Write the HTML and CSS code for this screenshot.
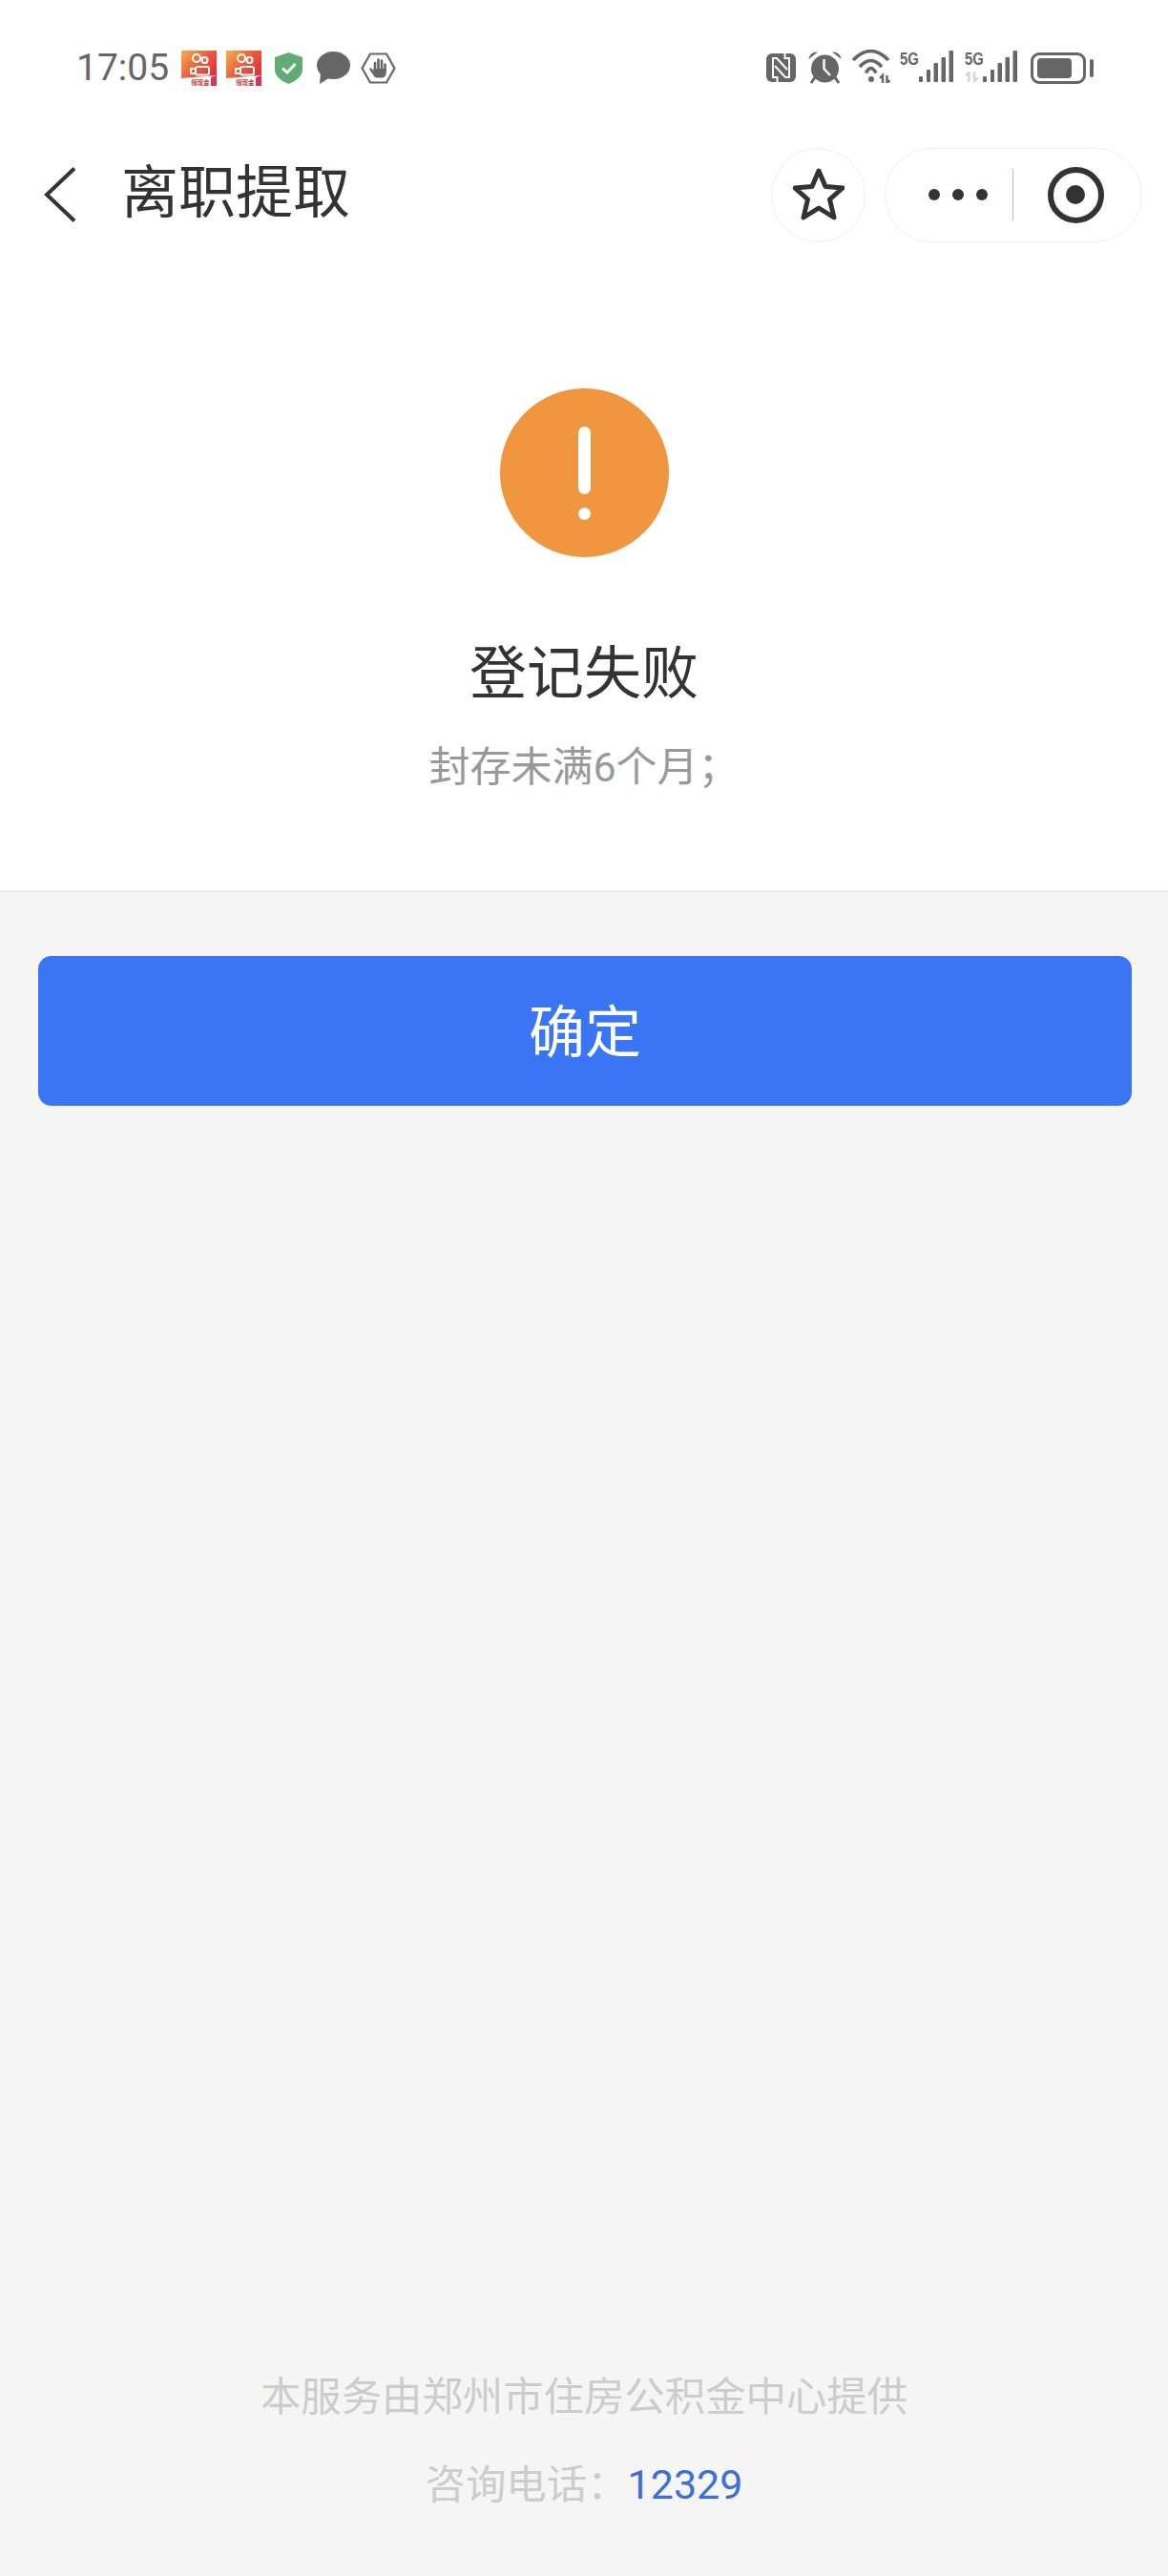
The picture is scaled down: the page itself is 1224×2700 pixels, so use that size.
FILE: index.html
```html
<!DOCTYPE html>
<html lang="zh-CN">
  <head>
    <meta charset="UTF-8" />
    <meta name="viewport" content="width=device-width, initial-scale=1.0" />
    <title>离职提取</title>
    <link rel="stylesheet" href="styles.css">
  </head>

  <body>
    <svg class="defs" width="0" height="0">
      <defs>
        <linearGradient id="ks-bg" x1="0" y1="0" x2="1" y2="0.7">
          <stop offset="0" stop-color="#f5b04a" />
          <stop offset="0.55" stop-color="#ec5f3c" />
          <stop offset="1" stop-color="#e2323a" />
        </linearGradient>
        <g id="ks-icon">
          <path d="M0 0H37V26L0 29Z" fill="url(#ks-bg)" />
          <circle cx="16" cy="8" r="4" fill="none" stroke="#fff" stroke-width="2" />
          <circle cx="24.500" cy="10" r="3" fill="none" stroke="#fff" stroke-width="2" />
          <rect x="15" y="17" width="14" height="8.500" rx="2" fill="none" stroke="#fff" stroke-width="2" />
          <path d="M15 19H10V24H15" fill="none" stroke="#fff" stroke-width="2" />
          <text x="10" y="35.500" class="ks-label">领现金</text>
          <path d="M31 28 37 26V37H31Z" fill="#d8345f" />
        </g>
        <g id="signal" fill="#666">
          <rect x="0" y="27" width="4" height="6" rx="1" />
          <rect x="8" y="20" width="4" height="13" rx="1" />
          <rect x="15.500" y="13" width="4.500" height="20" rx="1" />
          <rect x="23.500" y="7" width="4.500" height="26" rx="1" />
          <rect x="31.500" y="0" width="4.500" height="33" rx="1" />
        </g>
      </defs>
    </svg>

    <div class="top">
      <div class="status-bar">
        <div class="status-left">
          <span class="time">17:05</span>
          <svg class="ks" width="37" height="37" viewBox="0 0 37 37"><use href="#ks-icon" /></svg>
          <svg class="ks" width="37" height="37" viewBox="0 0 37 37"><use href="#ks-icon" /></svg>
          <svg class="shield" width="29" height="33" viewBox="0 0 29 33">
            <path d="M14.500 0 29 5V18C29 25 22 30 14.500 33 7 30 0 25 0 18V5Z" fill="#62ab74" />
            <path d="M8 16.500 13 21 21.500 12" fill="none" stroke="#fff" stroke-width="3" />
          </svg>
          <svg class="bubble" width="35" height="34" viewBox="0 0 35 34">
            <ellipse cx="17.500" cy="14.500" rx="17.500" ry="14.500" fill="#666" />
            <path d="M4 22 3 34 14 27Z" fill="#666" />
          </svg>
          <svg class="hand" width="37" height="33" viewBox="0 0 37 33">
            <path d="M10 1.500H27L35.500 16.500 27 31.500H10L1.500 16.500Z" fill="none" stroke="#666" stroke-width="2.200" />
            <path d="M15 18V11M18.500 18V7.500M22 18V8.500M25.500 19V12.500M10.500 17.500 14.500 23" fill="none" stroke="#666" stroke-width="2.600" stroke-linecap="round" />
            <path d="M13.500 17H26.800V21C26.800 24 25 26.500 22 26.500H17C15 26.500 14 25 13 23Z" fill="#666" />
          </svg>
        </div>
        <div class="status-right">
          <svg class="nfc" width="31" height="30" viewBox="0 0 31 30">
            <rect width="31" height="30" rx="6" fill="#666" />
            <path d="M11.500 30V25H7V5H11L22 17M19.500 0V5H24V25H20L9 13" fill="none" stroke="#fff" stroke-width="2" />
          </svg>
          <svg class="alarm" width="35" height="34" viewBox="0 0 35 34">
            <circle cx="17.500" cy="18" r="14.500" fill="#666" />
            <path d="M0.500 8C1 3 5 0 10 0.500ZM34.500 8C34 3 30 0 25 0.500Z" fill="#666" />
            <path d="M7 27 3 33M28 27 32 33" fill="none" stroke="#666" stroke-width="3" />
            <path d="M16.500 8V18L23 25" fill="none" stroke="#fff" stroke-width="2.400" />
          </svg>
          <svg class="wifi" width="41" height="35" viewBox="0 0 41 35">
            <path d="M2 11Q20.500 -8 39 11M9 18Q20.500 5 32 18M15.500 24.500Q20.500 14.500 26 24.500" fill="none" stroke="#666" stroke-width="3.600" />
            <circle cx="21" cy="31" r="3" fill="#666" />
            <path d="M30 30 33 27V35M37.500 27V35L40.500 32" fill="none" stroke="#666" stroke-width="2.400" />
          </svg>
          <div class="sim">
            <div class="sim-label">
              <span class="five-g">5G</span>
            </div>
            <svg width="36" height="33" viewBox="0 0 36 33"><use href="#signal" /></svg>
          </div>
          <div class="sim sim-two">
            <div class="sim-label">
              <span class="five-g">5G</span>
              <svg class="sim-arrows" width="16" height="11" viewBox="0 0 16 11">
                <path d="M1 4 4.500 1V11M10 0V10L14 6.500" fill="none" stroke="#d4d4d4" stroke-width="2.500" />
              </svg>
            </div>
            <svg width="36" height="33" viewBox="0 0 36 33"><use href="#signal" /></svg>
          </div>
          <div class="battery">
            <div class="battery-body"><div class="battery-level"></div></div>
            <div class="battery-nub"></div>
          </div>
        </div>
      </div>

      <div class="nav-bar">
        <svg class="back" width="34" height="58" viewBox="0 0 34 58">
          <path d="M32 1.500 3 29 32 56.500" fill="none" stroke="#333" stroke-width="4" />
        </svg>
        <h1 class="nav-title">离职提取</h1>
        <div class="star-button">
          <svg width="54" height="56" viewBox="0 0 54 56">
            <path d="M27 3 34 19.500 52 21 38.500 33 43 52 27 42 11 52 15.500 33 2 21 20 19.500Z" fill="none" stroke="#333" stroke-width="5" stroke-linejoin="round" />
          </svg>
        </div>
        <div class="capsule">
          <div class="capsule-more">
            <span class="dot"></span>
            <span class="dot"></span>
            <span class="dot"></span>
          </div>
          <div class="capsule-line"></div>
          <div class="capsule-target">
            <div class="target-ring"><div class="target-dot"></div></div>
          </div>
        </div>
      </div>

      <div class="result">
        <div class="warn-icon">
          <div class="warn-bar"></div>
          <div class="warn-dot"></div>
        </div>
        <h2 class="result-title">登记失败</h2>
        <p class="result-desc">封存未满6个月；</p>
      </div>
    </div>

    <div class="actions">
      <button class="confirm-button">确定</button>
    </div>

    <div class="footer">
      <p class="footer-line">本服务由郑州市住房公积金中心提供</p>
      <p class="footer-line footer-phone">咨询电话：<a class="phone-link">12329</a></p>
    </div>
  </body>
</html>
```

FILE: styles.css
```css
* {
  box-sizing: border-box;
}

body {
  display: flex;
  flex-direction: column;
  height: 2700px;
  margin: 0;
  background-color: #f5f5f5;
  font-family: Roboto, "Noto Sans CJK SC", sans-serif;
}

.defs {
  display: block;
  height: 0;
}

.ks-label {
  font-size: 6.500px;
  fill: #c43b35;
  font-weight: 700;
}

.top {
  background-color: #fff;
  border-bottom: 2px solid #eeeeee;
}

.status-bar {
  display: flex;
  justify-content: space-between;
  align-items: center;
  height: 142px;
  padding: 0 78px 0 80px;
}

.status-left {
  display: flex;
  align-items: center;
}

.time {
  width: 110px;
  font-size: 39px;
  color: #666;
}

.status-left .ks {
  margin-right: 10px;
}

.status-left .shield {
  margin: 0 15px 0 4px;
}

.status-left .bubble {
  margin-right: 11px;
}

.status-right {
  display: flex;
  align-items: center;
}

.status-right .alarm {
  margin-left: 13px;
}

.status-right .wifi {
  margin: 0 10px 3px 10px;
}

.sim {
  display: flex;
  height: 33px;
  margin-bottom: 3px;
}

.sim-two {
  margin-left: 12px;
}

.sim-label {
  display: flex;
  flex-direction: column;
  width: 20px;
}

.sim-two .sim-label {
  width: 19px;
}

.five-g {
  margin-top: 2px;
  font-family: "Liberation Sans", sans-serif;
  font-size: 19px;
  line-height: 13px;
  font-weight: 700;
  color: #666;
  transform: scaleX(0.78);
  transform-origin: left;
}

.sim-arrows {
  margin-top: auto;
}

.battery {
  display: flex;
  align-items: center;
  gap: 4px;
  margin-left: 14px;
}

.battery-body {
  width: 58px;
  height: 33px;
  padding: 3px 12px 3px 4px;
  border: 3px solid #666;
  border-radius: 9px;
}

.battery-level {
  height: 100%;
  background-color: #666;
  border-radius: 4px;
}

.battery-nub {
  width: 4px;
  height: 19px;
  background-color: #666;
  border-radius: 2px;
}

.nav-bar {
  display: flex;
  align-items: center;
  height: 124px;
  padding: 0 27px 0 46px;
}

.nav-title {
  flex: 1;
  margin: 0 0 16px 47px;
  font-size: 60px;
  font-weight: 400;
  color: #333;
}

.star-button {
  display: flex;
  align-items: center;
  justify-content: center;
  width: 99px;
  height: 99px;
  margin-right: 20px;
  border: 1px solid #f0f0f0;
  border-radius: 50%;
}

.capsule {
  display: flex;
  align-items: center;
  width: 270px;
  height: 99px;
  border: 1px solid #f0f0f0;
  border-radius: 50px;
}

.capsule-more {
  display: flex;
  justify-content: flex-end;
  gap: 13px;
  width: 133px;
  padding-right: 26px;
}

.dot {
  width: 12px;
  height: 12px;
  background-color: #333;
  border-radius: 50%;
}

.capsule-line {
  width: 1px;
  height: 54px;
  background-color: #bbb;
}

.capsule-target {
  display: flex;
  justify-content: center;
  flex: 1;
  padding-right: 4px;
}

.target-ring {
  display: flex;
  align-items: center;
  justify-content: center;
  width: 59px;
  height: 59px;
  border: 6px solid #333;
  border-radius: 50%;
}

.target-dot {
  width: 20px;
  height: 20px;
  background-color: #333;
  border-radius: 50%;
}

.result {
  display: flex;
  flex-direction: column;
  align-items: center;
  height: 667px;
  padding-top: 141px;
}

.warn-icon {
  display: flex;
  flex-direction: column;
  align-items: center;
  width: 177px;
  height: 177px;
  padding-top: 40px;
  background-color: #f0963f;
  border-radius: 50%;
}

.warn-bar {
  width: 13px;
  height: 71px;
  background-color: #fff;
  border-radius: 7px;
}

.warn-dot {
  width: 13px;
  height: 13px;
  margin-top: 14px;
  background-color: #fff;
  border-radius: 50%;
}

.result-title {
  margin: 83px 0 0;
  font-size: 60px;
  line-height: 80px;
  font-weight: 400;
  color: #333;
}

.result-desc {
  margin: 27px 0 0;
  font-size: 43px;
  line-height: 60px;
  color: #999;
}

.actions {
  flex: 1;
  padding: 67px 38px 0 40px;
}

.confirm-button {
  display: block;
  width: 100%;
  height: 157px;
  padding: 0 0 6px;
  border: none;
  border-radius: 14px;
  background-color: #3a75f5;
  color: #fff;
  font-family: inherit;
  font-size: 59px;
}

.footer {
  padding-bottom: 65px;
  text-align: center;
}

.footer-line {
  margin: 0;
  font-size: 42.400px;
  line-height: 60px;
  color: #ccc;
}

.footer-phone {
  margin-top: 31px;
}

.phone-link {
  font-size: 43px;
  color: #3d6fd6;
}
```
